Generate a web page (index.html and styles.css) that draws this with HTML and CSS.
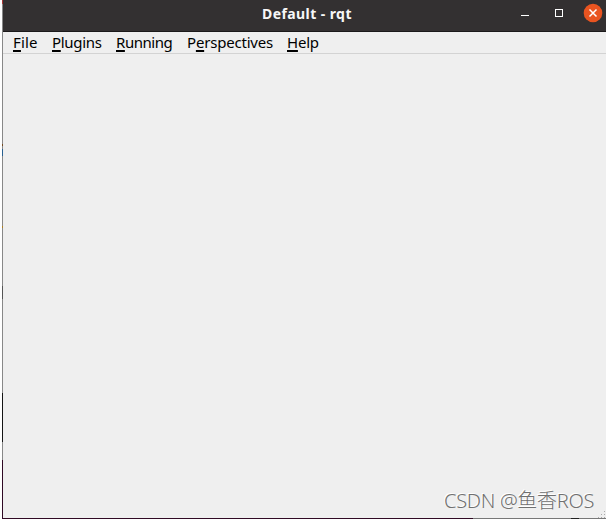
FILE: index.html
```
<!DOCTYPE html>
<html lang="en">
<head>
<meta charset="utf-8">
<title>Default - rqt</title>
<link rel="stylesheet" href="styles.css">
</head>
<body>
<div class="desktop">
  <div class="edge"></div>
  <main class="window">
    <header class="titlebar">
      <h1 class="title">Default - rqt</h1>
      <div class="controls">
        <svg width="82" height="20" viewBox="0 0 82 20">
          <path d="M0 12.5h8" stroke="#fff"/>
          <rect x="34.5" y="6.5" width="7" height="7" fill="none" stroke="#fff"/>
          <circle cx="72" cy="10" r="9.3" fill="#e95420"/>
          <path d="M68.5 6.5l7 7m0-7l-7 7" stroke="#fff" stroke-width="1.5"/>
        </svg>
      </div>
    </header>
    <nav class="menubar">
      <span class="item file"><u>F</u>ile</span>
      <span class="item plugins"><u>P</u>lugins</span>
      <span class="item running"><u>R</u>unning</span>
      <span class="item perspectives">P<u>e</u>rspectives</span>
      <span class="item help"><u>H</u>elp</span>
    </nav>
    <section class="content">
      <div class="watermark">CSDN @鱼香ROS</div>
      <svg class="grip" width="8" height="8" viewBox="0 0 8 8">
        <path d="M6 1.5h1M3 4.5h1M6 4.5h1M0 7.5h1M3 7.5h1M6 7.5h1" stroke="#aaa"/>
      </svg>
    </section>
    <div class="bottom-edge"></div>
  </main>
</div>
</body>
</html>
```

FILE: styles.css
```
* { box-sizing: border-box; }
body { margin: 0; overflow: hidden; background: #fff; }
.desktop { display: flex; width: 606px; height: 519px; padding-left: 2px; }
.edge {
  flex: none;
  width: 1px;
  background: linear-gradient(#a33 0 4px, #888 4px 144px, #744a20 144px 146px, #888 146px 149px, #286090 149px 156px, #888 156px 226px, #b08020 226px 228px, #888 228px 286px, #555 286px 299px, #888 299px 393px, #151515 393px 442px, #888 442px 460px, #300a24 460px);
}
.window { flex: 1; min-width: 0; display: flex; flex-direction: column; background: #efefef; }
.titlebar {
  display: grid;
  grid-template-columns: 259px 1fr 85px;
  height: 32px;
  background: #333031;
  border-bottom: 1px solid #1b191a;
}
.title {
  grid-column: 1 / 3;
  margin: 0;
  padding-left: 259px;
  font: 700 14px/28px "Noto Sans", "Open Sans", sans-serif;
  letter-spacing: 0.42px;
  color: #f7f7f7;
  white-space: nowrap;
}
.controls { padding-top: 3px; }
.controls svg { display: block; }
.menubar {
  display: flex;
  height: 22px;
  padding-left: 10px;
  border-bottom: 1px solid #d3d3d3;
  font: 15px/20px "Noto Sans", "Open Sans", sans-serif;
  color: #000;
  white-space: nowrap;
}
.item u { text-decoration: underline 2px; text-underline-offset: 2px; text-decoration-skip-ink: none; }
.file { width: 39px; letter-spacing: 0.15px; }
.plugins { width: 64px; letter-spacing: -0.3px; }
.running { width: 71px; letter-spacing: -0.45px; }
.perspectives { width: 100px; letter-spacing: -0.2px; }
.help { width: 33px; letter-spacing: -0.2px; }
.content { flex: 1; display: flex; align-items: flex-end; padding-left: 441px; }
.watermark {
  width: 154px;
  font: 300 20px/34px "Noto Sans", "Noto Sans CJK SC", sans-serif;
  letter-spacing: -0.3px;
  color: #707070;
  text-shadow: -1px -1px 0 #fff;
  white-space: nowrap;
}
.grip { flex: none; }
.bottom-edge {
  height: 1px;
  background: linear-gradient(90deg, #300a24 0 470px, #777 470px 568px, #222 568px 576px, #777 576px);
}
```
